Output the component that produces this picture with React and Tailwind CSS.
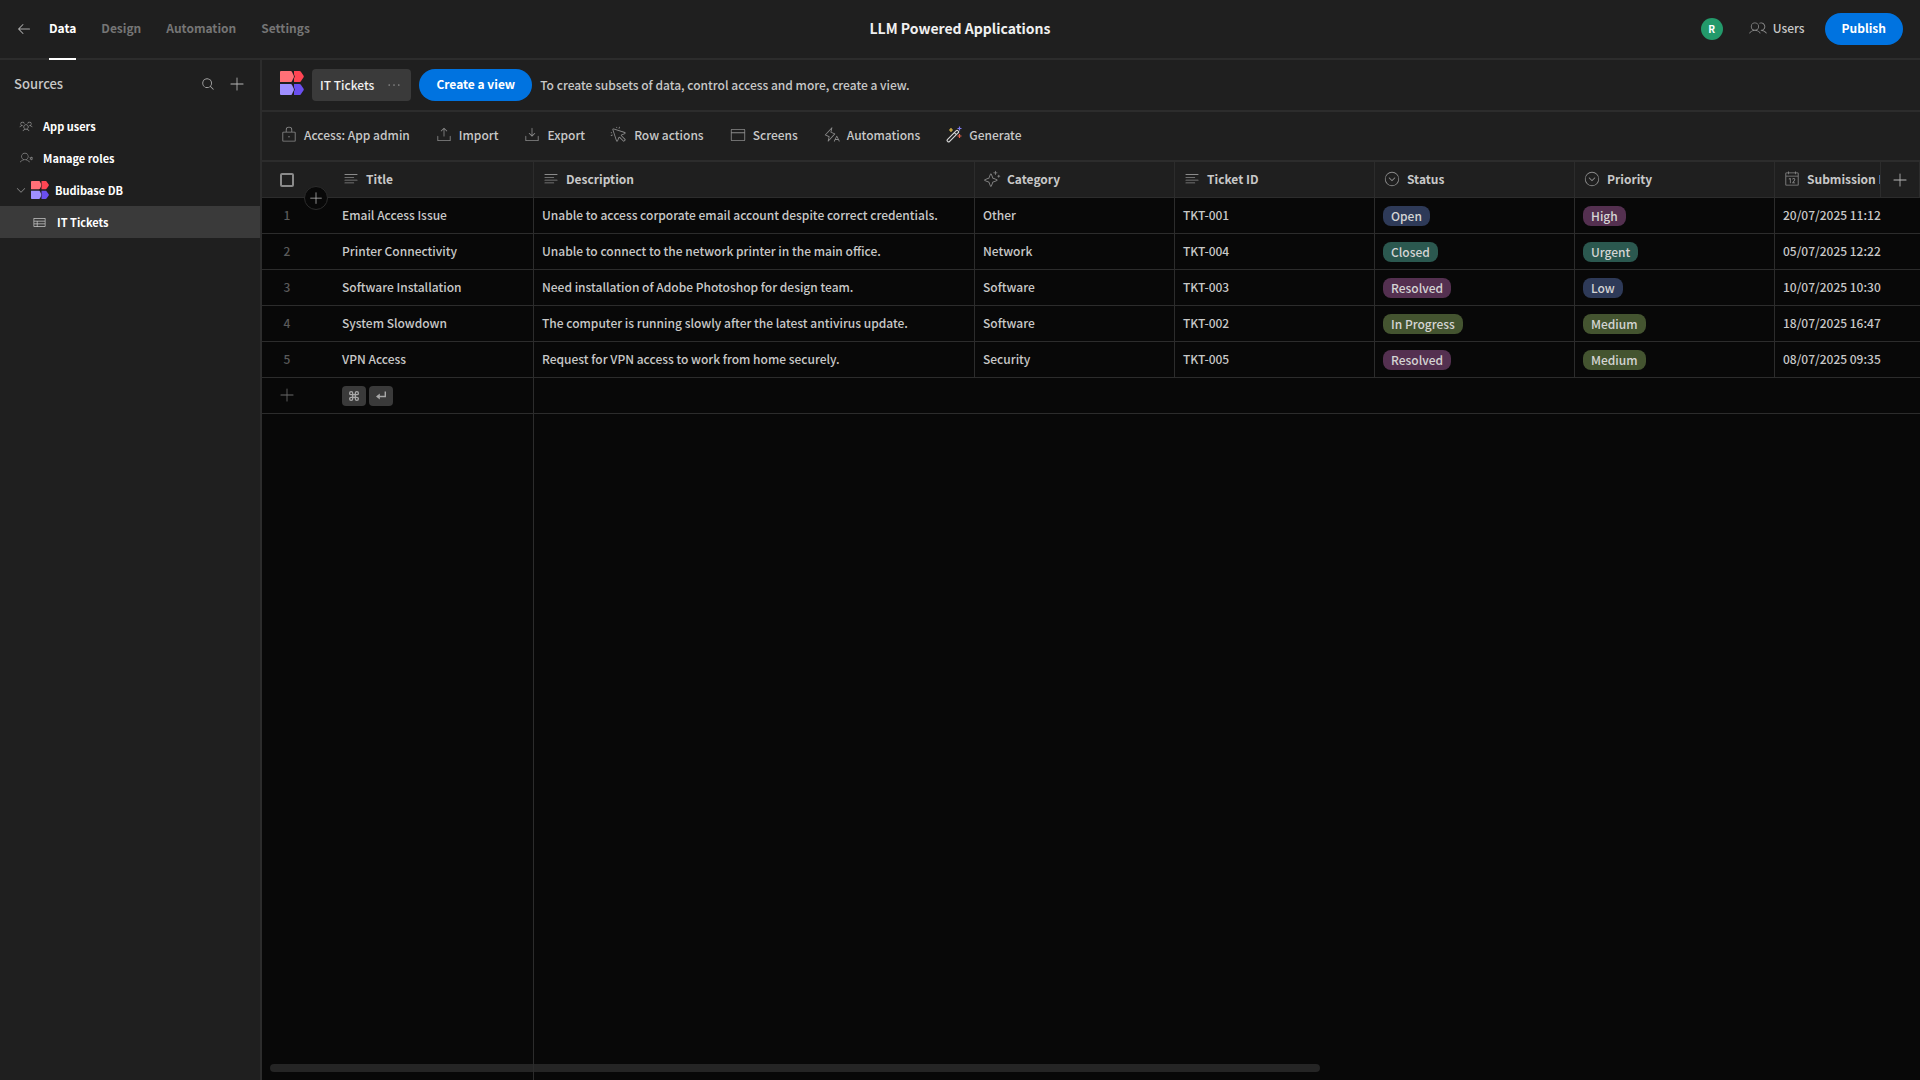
import React from 'react';
import {
  PiArrowLeft, PiBrowserLight, PiCalendarLight, PiCaretCircleDownLight, PiCaretDown,
  PiCommandBold, PiCursorClickLight, PiDotsThree, PiDownloadSimpleLight, PiLightningALight,
  PiLockLight, PiMagnifyingGlass, PiPlusLight, PiSparkleLight, PiTableLight,
  PiTextAlignLeftLight, PiUploadSimpleLight, PiUserGearLight, PiUsersLight, PiUsersThreeLight,
} from 'react-icons/pi';

const tabs = ['Data', 'Design', 'Automation', 'Settings'];

const columns = [
  { label: 'Title', icon: PiTextAlignLeftLight, width: 'w-[200px]' },
  { label: 'Description', icon: PiTextAlignLeftLight, width: 'w-[441px]' },
  { label: 'Category', icon: PiSparkleLight, width: 'w-[200px]' },
  { label: 'Ticket ID', icon: PiTextAlignLeftLight, width: 'w-[200px]' },
  { label: 'Status', icon: PiCaretCircleDownLight, width: 'w-[200px]' },
  { label: 'Priority', icon: PiCaretCircleDownLight, width: 'w-[200px]' },
  { label: 'Submission Date', icon: PiCalendarLight, width: 'w-[200px]' },
];

const rows = [
  { title: 'Email Access Issue', description: 'Unable to access corporate email account despite correct credentials.', category: 'Other', id: 'TKT-001', status: 'Open', priority: 'High', date: '20/07/2025 11:12' },
  { title: 'Printer Connectivity', description: 'Unable to connect to the network printer in the main office.', category: 'Network', id: 'TKT-004', status: 'Closed', priority: 'Urgent', date: '05/07/2025 12:22' },
  { title: 'Software Installation', description: 'Need installation of Adobe Photoshop for design team.', category: 'Software', id: 'TKT-003', status: 'Resolved', priority: 'Low', date: '10/07/2025 10:30' },
  { title: 'System Slowdown', description: 'The computer is running slowly after the latest antivirus update.', category: 'Software', id: 'TKT-002', status: 'In Progress', priority: 'Medium', date: '18/07/2025 16:47' },
  { title: 'VPN Access', description: 'Request for VPN access to work from home securely.', category: 'Security', id: 'TKT-005', status: 'Resolved', priority: 'Medium', date: '08/07/2025 09:35' },
];

const pillColors = {
  Open: 'bg-[#2e3a58]',
  Low: 'bg-[#2e3a58]',
  Closed: 'bg-[#2b584f]',
  Urgent: 'bg-[#2b584f]',
  Resolved: 'bg-[#543050]',
  High: 'bg-[#543050]',
  'In Progress': 'bg-[#445430]',
  Medium: 'bg-[#445430]',
};

const toolbar = [
  { label: 'Access: App admin', icon: PiLockLight },
  { label: 'Import', icon: PiUploadSimpleLight },
  { label: 'Export', icon: PiDownloadSimpleLight },
  { label: 'Row actions', icon: PiCursorClickLight },
  { label: 'Screens', icon: PiBrowserLight },
  { label: 'Automations', icon: PiLightningALight },
  { label: 'Generate', icon: WandIcon },
];

function BudibaseLogo({ className }) {
  return (
    <svg viewBox="0 0 24 24" className={className} aria-hidden="true">
      <path fill="#ff7077" d="M0 1a1 1 0 0 1 1-1h9.6c.5 0 .9.2 1.2.6l2 4.2c.2.5.2.9 0 1.4l-2 4.2c-.3.4-.7.6-1.2.6H0z" />
      <path fill="#ff4553" d="M14 0h5.4c.5 0 1 .2 1.3.6l2.9 4.2c.3.5.3.9 0 1.4l-2.9 4.2c-.3.4-.8.6-1.3.6H14V7.5l.9-2-.9-2z" />
      <path fill="#9f8fff" d="M0 13h10.6c.5 0 .9.2 1.2.6l2 4.2c.2.5.2.9 0 1.4l-2 4.2c-.3.4-.7.6-1.2.6H1a1 1 0 0 1-1-1z" />
      <path fill="#6a4ff0" d="M14 13h5.4c.5 0 1 .2 1.3.6l2.9 4.2c.3.5.3.9 0 1.4l-2.9 4.2c-.3.4-.8.6-1.3.6H14v-3.5l.9-2-.9-2z" />
    </svg>
  );
}

function WandIcon({ className }) {
  return (
    <svg viewBox="0 0 18 18" fill="none" className={className} aria-hidden="true">
      <path stroke="#d4d4d4" strokeWidth="1.2" strokeLinejoin="round" d="M11.3 4.7a1 1 0 0 1 1.5 0l.5.5a1 1 0 0 1 0 1.5L4.4 15.6a1 1 0 0 1-1.5 0l-.5-.5a1 1 0 0 1 0-1.5zM9.3 6.7l2 2" />
      <path stroke="#e5c04a" strokeWidth="1.2" d="M6 2v4M4 4h4" />
      <path stroke="#7d7af0" strokeWidth="1.2" d="M14.5.5v4M12.5 2.5h4" />
      <path stroke="#e5624a" strokeWidth="1.2" d="M14.5 8v4M12.5 10h4" />
    </svg>
  );
}

function ReturnIcon({ className }) {
  return (
    <svg viewBox="0 0 12 12" fill="none" className={className} aria-hidden="true">
      <path stroke="currentColor" strokeWidth="1.4" d="M10.3 1.5v5H4" />
      <path fill="currentColor" d="M1 6.5l3.8-2.9v5.8z" />
    </svg>
  );
}

function Pill({ label }) {
  return (
    <span className={`flex h-5 w-fit items-center rounded-lg px-2 text-[#d4d4d4] ${pillColors[label]}`}>
      {label}
    </span>
  );
}

function TopBar() {
  return (
    <header className="grid h-[60px] shrink-0 grid-cols-[1fr_auto_1fr] items-center border-b-2 border-[#2c2c2c]">
      <div className="flex h-full items-center pl-4">
        <button aria-label="Back" className="mr-[17px] text-[#a8a8a8]">
          <PiArrowLeft className="size-4" />
        </button>
        <nav className="-mb-0.5 flex h-[60px] gap-[25px]">
          {tabs.map((tab) => (
            <a
              key={tab}
              href="#"
              className={tab === 'Data'
                ? 'flex items-center border-b-2 border-white pb-0.5 font-bold text-white'
                : 'flex items-center border-b-2 border-transparent pb-0.5 font-bold text-[#757575]'}
            >
              {tab}
            </a>
          ))}
        </nav>
      </div>
      <h1 className="pb-0.5 text-[14px] font-bold text-[#f0f0f0]">LLM Powered Applications</h1>
      <div className="flex items-center justify-end pr-[17px]">
        <span className="mr-[26px] flex size-[22px] items-center justify-center rounded-full bg-[#239a6b] text-[10px] font-bold text-white">R</span>
        <button className="mr-5 flex items-center gap-1.5 pb-0.5">
          <PiUsersLight className="size-[18px] text-[#8a8a8a]" />
          Users
        </button>
        <button className="h-8 rounded-full bg-[#0073e0] px-[17px] pb-0.5 font-bold text-white">Publish</button>
      </div>
    </header>
  );
}

function Sidebar() {
  return (
    <aside className="flex w-[262px] shrink-0 flex-col border-r-2 border-[#2c2c2c]">
      <div className="flex h-[50px] items-center px-[14px] pb-0.5">
        <h2 className="flex-1 text-[13px]">Sources</h2>
        <button aria-label="Search" className="mr-[13px] text-[#a8a8a8]"><PiMagnifyingGlass className="size-[14px]" /></button>
        <button aria-label="Add source" className="text-[#b8b8b8]"><PiPlusLight className="size-[18px]" /></button>
      </div>
      <nav className="text-[11px] font-bold text-white">
        <a href="#" className="flex h-8 items-center gap-2.5 pl-[19px]">
          <PiUsersThreeLight className="size-[14px] text-[#8a8a8a]" />
          App users
        </a>
        <a href="#" className="flex h-8 items-center gap-2.5 pl-[19px]">
          <PiUserGearLight className="size-[14px] text-[#8a8a8a]" />
          Manage roles
        </a>
        <a href="#" className="flex h-8 items-center pl-[15px]">
          <PiCaretDown className="mr-1 size-3 text-[#8a8a8a]" />
          <BudibaseLogo className="mr-1.5 size-[18px]" />
          Budibase DB
        </a>
        <a href="#" className="flex h-8 items-center gap-2.5 bg-[#3a3a3a] pl-8">
          <PiTableLight className="size-[15px] text-[#c8c8c8]" />
          IT Tickets
        </a>
      </nav>
    </aside>
  );
}

function Grid() {
  return (
    <section className="relative flex flex-1 flex-col overflow-hidden bg-[#080808]">
      <table className="w-max table-fixed border-separate border-spacing-0 text-left">
        <thead>
          <tr className="h-9 bg-[#1f1f1f]">
            <th className="relative w-[72px] border-b border-[#2c2c2c] pl-[18px]">
              <input
                type="checkbox"
                aria-label="Select all rows"
                className="block size-[14px] appearance-none rounded-[2px] border-2 border-[#8a8a8a]"
              />
              <button
                aria-label="Insert row"
                className="absolute top-6 left-[42px] flex size-6 items-center justify-center rounded-full border border-[#2c2c2c] bg-[#080808] text-[#b8b8b8]"
              >
                <PiPlusLight className="size-4" />
              </button>
            </th>
            {columns.map((col) => (
              <th key={col.label} className={`border-r border-b border-[#2c2c2c] px-2 pb-0.5 font-bold text-[#c8c8c8] ${col.width}`}>
                <span className="flex items-center gap-1.5 whitespace-nowrap">
                  <col.icon className="size-[18px] shrink-0 text-[#8a8a8a]" />
                  {col.label}
                </span>
              </th>
            ))}
          </tr>
        </thead>
        <tbody>
          {rows.map((row, i) => (
            <tr key={row.id} className="h-9 *:border-b *:border-[#2c2c2c] *:px-2">
              <td className="pb-0.5 text-[#5a5a5a]"><span className="block w-[34px] text-center">{i + 1}</span></td>
              <td className="border-r pb-0.5">{row.title}</td>
              <td className="border-r pb-0.5">{row.description}</td>
              <td className="border-r pb-0.5">{row.category}</td>
              <td className="border-r pb-0.5">{row.id}</td>
              <td className="border-r"><Pill label={row.status} /></td>
              <td className="border-r"><Pill label={row.priority} /></td>
              <td className="border-r pb-0.5">{row.date}</td>
            </tr>
          ))}
          <tr className="h-9 *:border-b *:border-[#2c2c2c] *:px-2">
            <td className="pb-0.5">
              <button aria-label="Add row" className="flex w-[34px] justify-center text-[#6a6a6a]"><PiPlusLight className="size-[18px]" /></button>
            </td>
            <td className="border-r">
              <span className="flex gap-[3px] text-[#a8a8a8]">
                <kbd className="flex h-5 w-6 items-center justify-center rounded bg-[#3a3a3a]"><PiCommandBold className="size-[14px]" /></kbd>
                <kbd className="flex h-5 w-6 items-center justify-center rounded bg-[#3a3a3a]"><ReturnIcon className="size-3" /></kbd>
              </span>
            </td>
            <td colSpan={6} />
          </tr>
        </tbody>
      </table>
      <button
        aria-label="Add column"
        className="absolute top-0 right-0 flex h-9 w-10 items-center justify-center border-x border-b border-[#2c2c2c] bg-[#1f1f1f] text-[#b8b8b8]"
      >
        <PiPlusLight className="size-[18px]" />
      </button>
      <div className="absolute bottom-2 left-2 h-2 w-[1050px] rounded-full bg-[#252525]" />
      <div className="relative w-[272px] flex-1 border-r border-[#2c2c2c]" />
    </section>
  );
}

export default function App() {
  return (
    <div className="flex h-screen flex-col overflow-hidden bg-[#1f1f1f] font-['Noto_Sans_CJK_SC',sans-serif] text-[12px] leading-5 font-medium text-[#c8c8c8]">
      <TopBar />
      <div className="flex min-h-0 flex-1">
        <Sidebar />
        <main className="flex min-w-0 flex-1 flex-col">
          <div className="flex h-[52px] shrink-0 items-center gap-2 border-b-2 border-[#2c2c2c] pl-[18px]">
            <BudibaseLogo className="mb-1 size-6" />
            <button className="flex h-8 items-center gap-[11px] rounded bg-[#3a3a3a] px-2 text-[#f0f0f0]">
              IT Tickets
              <PiDotsThree className="size-[18px] text-[#8a8a8a]" />
            </button>
            <button className="h-8 rounded-full bg-[#0073e0] px-[17px] pb-0.5 font-bold text-white">Create a view</button>
            <p>To create subsets of data, control access and more, create a view.</p>
          </div>
          <div className="flex h-[50px] shrink-0 items-center gap-[25px] border-b-2 border-[#2c2c2c] pb-0.5 pl-[18px]">
            {toolbar.map((item) => (
              <button key={item.label} className="flex items-center gap-1.5">
                <item.icon className="size-[18px] text-[#8a8a8a]" />
                {item.label}
              </button>
            ))}
          </div>
          <Grid />
        </main>
      </div>
    </div>
  );
}
